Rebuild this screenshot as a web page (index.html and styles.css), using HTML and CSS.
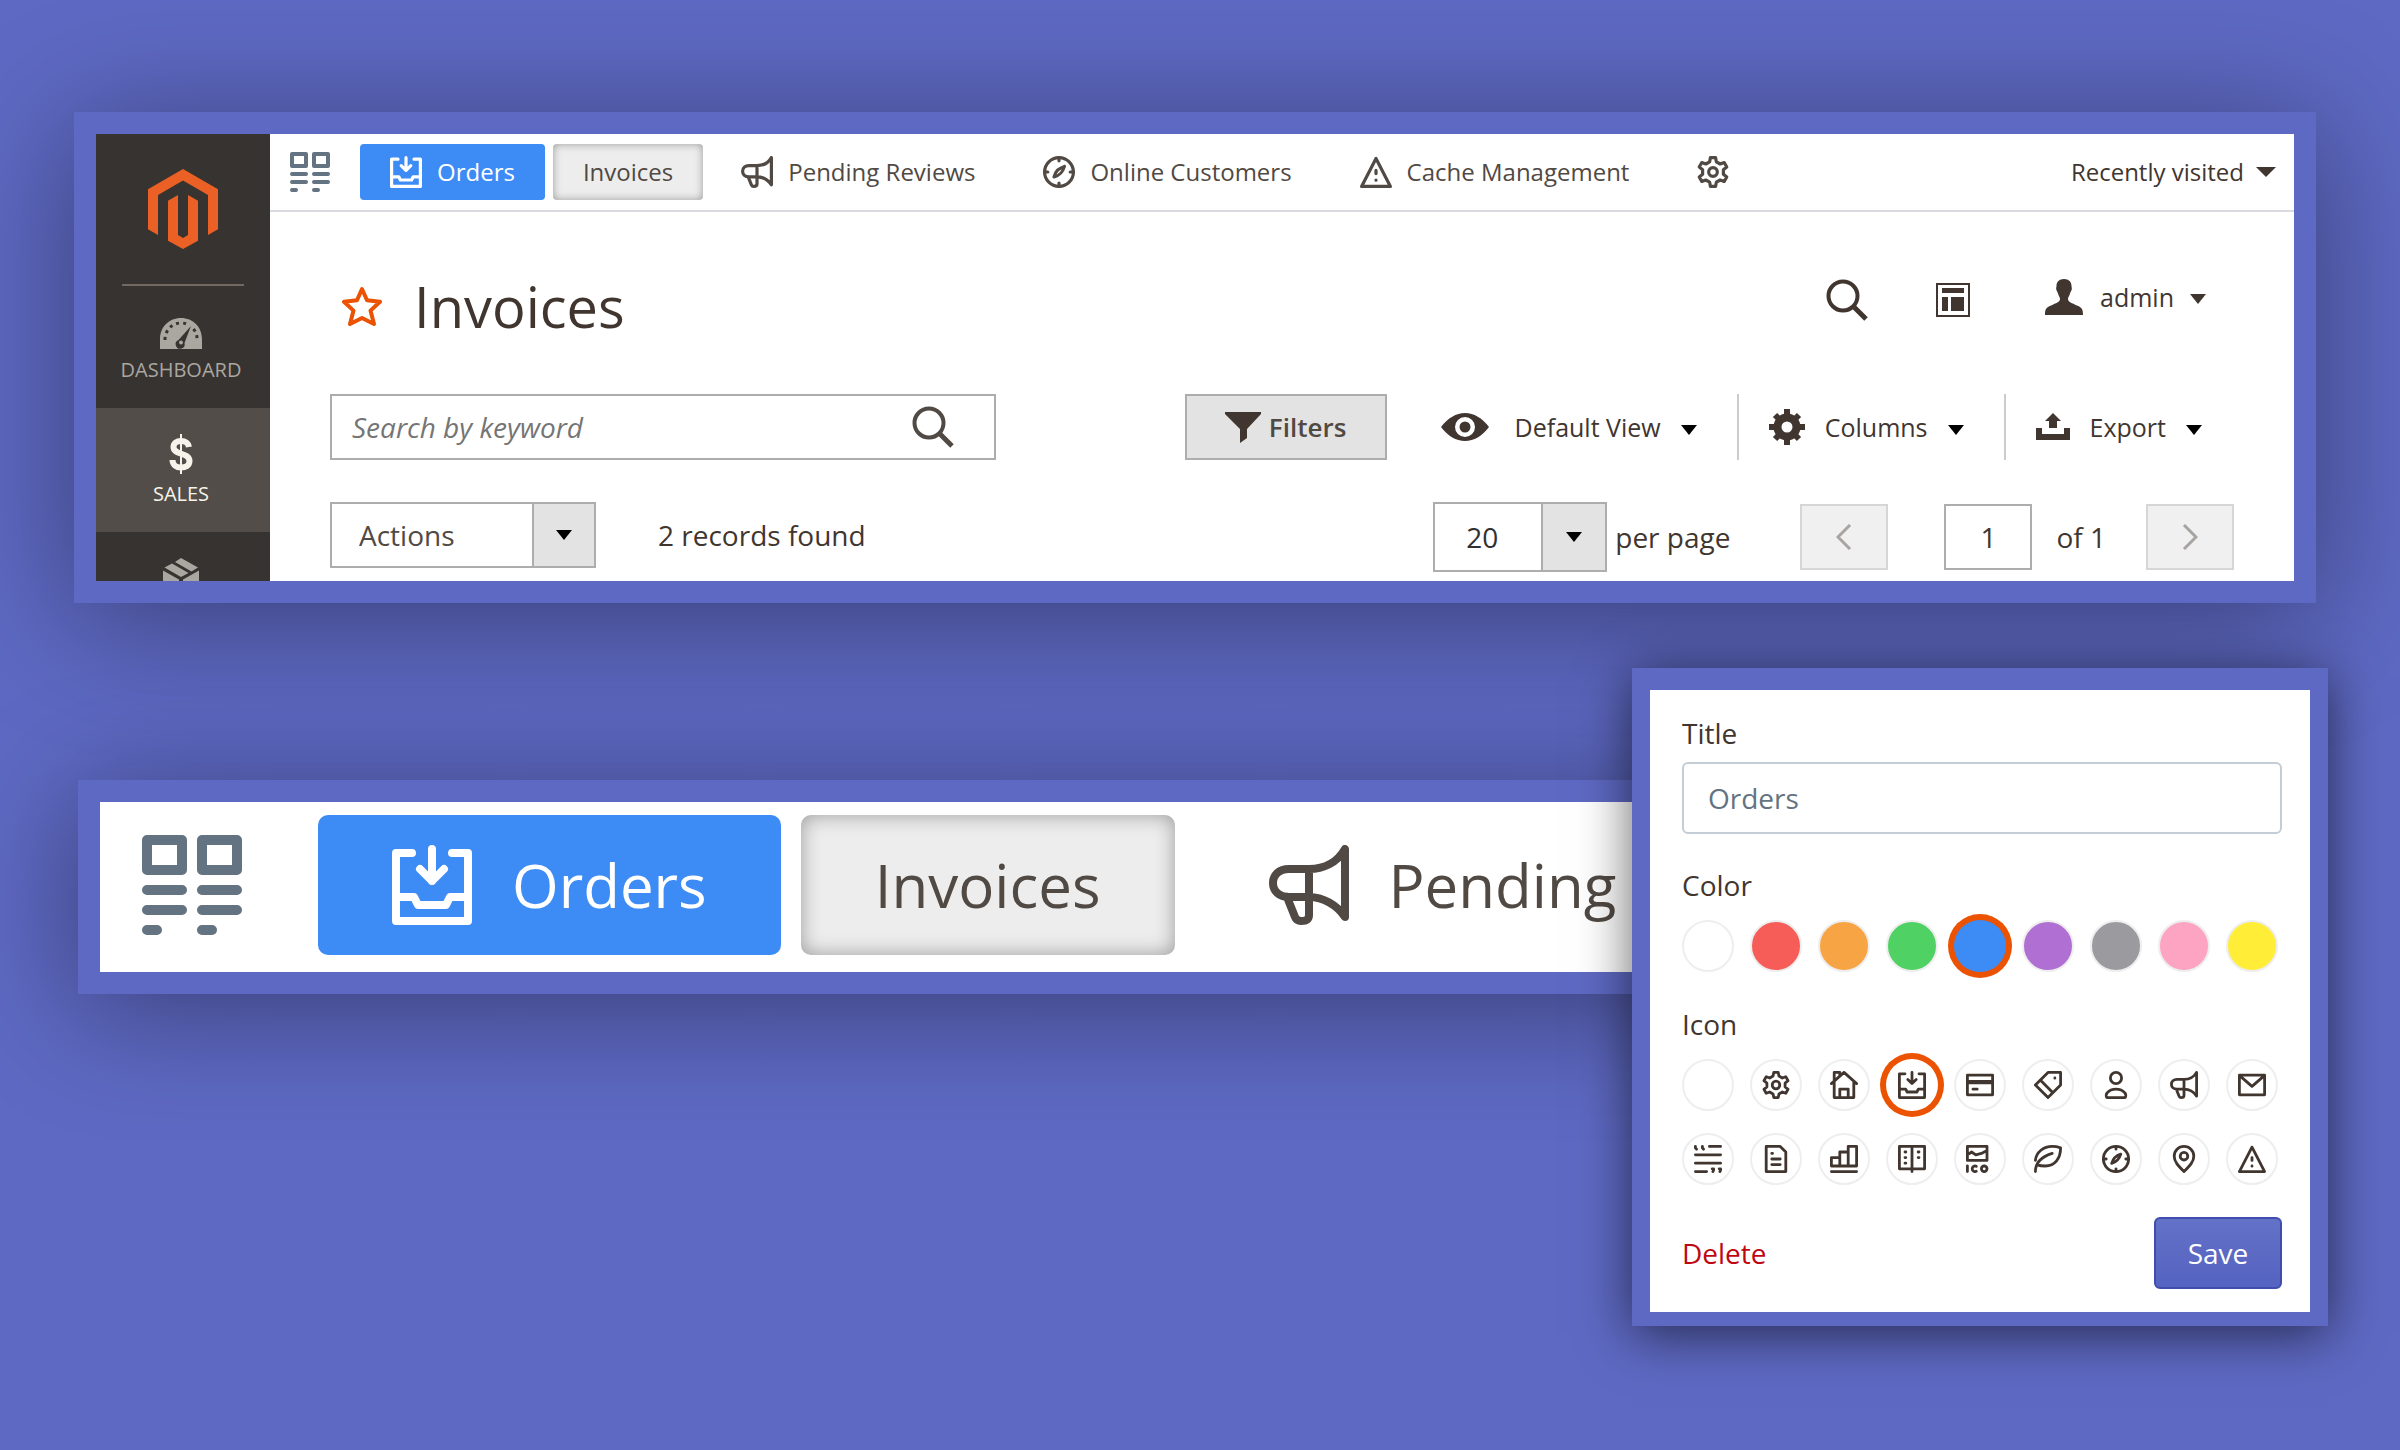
FILE: index.html
```html
<!DOCTYPE html>
<html lang="en">
<head>
    <meta charset="UTF-8">
    <title>Invoices - Admin bookmarks</title>
    <meta name="viewport" content="width=device-width, initial-scale=1">
    <link rel="stylesheet" href="styles.css">
</head>
<body>
    <!-- icon sprite, 20x20 grid -->
    <svg class="sprite" aria-hidden="true">
        <symbol id="i-grid" viewBox="0 0 20 20">
            <path fill="none" stroke="currentColor" stroke-width="2" stroke-linejoin="round" d="M1 1h7v6H1zM12 1h7v6h-7z"/>
            <path fill="none" stroke="currentColor" stroke-width="2" stroke-linecap="round" d="M1 11h7M12 11h7M1 15h7M12 15h7M1 19h2M12 19h2"/>
        </symbol>
        <symbol id="i-gear" viewBox="0 0 20 20">
            <path d="M8.4 1h3.2l.5 2.6 2.4 1.4 2.5-.9 1.6 2.8-2.1 1.7v2.8l2.1 1.7-1.6 2.8-2.5-.9-2.4 1.4-.5 2.6H8.4l-.5-2.6-2.4-1.4-2.5.9-1.6-2.8 2.1-1.7V8.6L1.4 6.9 3 4.1l2.5.9 2.4-1.4z"/>
            <circle cx="10" cy="10" r="2.7"/>
        </symbol>
        <symbol id="i-home" viewBox="0 0 20 20">
            <path d="M1 9l9-8 9 8M3 8v11h14V8M7 19v-6h6v6M3 7V1h4v2"/>
        </symbol>
        <symbol id="i-inbox" viewBox="0 0 20 20">
            <path d="M5 2H1v17h18V2h-4M10 1v8M7 6l3 3 3-3M1 13h4.5l1 2h7l1-2H19"/>
        </symbol>
        <symbol id="i-card" viewBox="0 0 20 20">
            <path d="M1 3h18v14H1zM5 13h3"/>
            <path stroke-width="3" d="M1 8h18"/>
        </symbol>
        <symbol id="i-tag" viewBox="0 0 20 20">
            <path d="M10 1h9v9l-9 9-9-9zM4.5 6.5l9 9M14.9 5v.1"/>
        </symbol>
        <symbol id="i-user" viewBox="0 0 20 20">
            <circle cx="10" cy="5" r="4"/>
            <path d="M3.5 19h13c.8-.8.5-2.5 0-3.2C14.9 14 12.6 13 10 13s-4.9 1-6.5 2.8c-.5.7-.8 2.4 0 3.2z"/>
        </symbol>
        <symbol id="i-horn" viewBox="0 0 20 20">
            <path d="M19 1v17c-2-3-5.500-5-9-5H5c-2.500 0-4-1.500-4-3.500S2.500 6 5 6h5c3.500 0 7-1.500 9-5zM4.500 13l2 5c.3.8.8 1 1.500 1 1 0 2-.2 2-1.500V6"/>
        </symbol>
        <symbol id="i-mail" viewBox="0 0 20 20">
            <path d="M1 3h18v14H1zM2 4l8 7 8-7"/>
        </symbol>
        <symbol id="i-quote" viewBox="0 0 20 20">
            <path d="M11 1h8M1 7h18M1 13h18M1 19h8M1 1v1l.8 1M6 1v1l.8 1M13 17h1v1l-.5 1M18 17h1v1l-.5 1"/>
        </symbol>
        <symbol id="i-doc" viewBox="0 0 20 20">
            <path d="M3 1h10l4 4v14H3zM7 6h.5M7 10h6M7 14h6"/>
        </symbol>
        <symbol id="i-chart" viewBox="0 0 20 20">
            <path d="M1 15V9h6v6M7 9V5h6v10M13 5V1h6v14H1M1 19h18"/>
        </symbol>
        <symbol id="i-book" viewBox="0 0 20 20">
            <path d="M1 1h18v16H1zM10 1v18M5 5h.6M5 9h.6M5 13h.6M14.400 5h.6M14.400 9h.6"/>
        </symbol>
        <symbol id="i-ico" viewBox="0 0 20 20">
            <path d="M1 1h14v10H1zM1 7l3-2 3 2 4-1 4-2M1 15v4M7.300 15.200a2 2 0 1 0 0 3.600"/>
            <circle cx="13" cy="17" r="2"/>
        </symbol>
        <symbol id="i-leaf" viewBox="0 0 20 20">
            <path d="M1 11C1.500 5 7 1 13 1c2.500 0 4.500.5 6 1 0 7.500-4 13-11 13-2 0-3.500 0-5-.6M1 19c0-6 4-10.500 12-13"/>
        </symbol>
        <symbol id="i-compass" viewBox="0 0 20 20">
            <circle cx="10" cy="10" r="9"/>
            <path d="M10 1v2M10 17v2M1 10h2M17 10h2M13.400 6.500C9.500 7.800 8 9.400 6.900 13.100c3.900-1.100 5.400-2.900 6.500-6.600z"/>
        </symbol>
        <symbol id="i-pin" viewBox="0 0 20 20">
            <path d="M10 19C6 15 3 12 3 8a7 7 0 0 1 14 0c0 4-3 7-7 11z"/>
            <circle cx="10" cy="8" r="2.700"/>
        </symbol>
        <symbol id="i-alert" viewBox="0 0 20 20">
            <path d="M10 1.500L1 19h18zM10 9v2M10 15v.1"/>
        </symbol>
        <symbol id="i-search" viewBox="0 0 42 42">
            <circle cx="17" cy="17" r="14.500" fill="none" stroke="currentColor" stroke-width="4"/>
            <path fill="none" stroke="currentColor" stroke-width="5" d="M27 27l13 13"/>
        </symbol>
    </svg>

    <section class="frame admin">
        <nav class="sidebar">
            <a href="#" class="logo" aria-label="Magento">
                <svg width="70" height="80" viewBox="0 0 35 40" fill="#eb6125">
                    <path d="M0 10.100L17.500 0 35 10.100v20l-5 2.900V13L17.500 5.800 5 13v20l-5-2.900z"/>
                    <path d="M10 15.900L15 13v20l2.500 1.500L20 33V13l5 2.900v20L17.500 40 10 35.900z"/>
                </svg>
            </a>
            <a href="#" class="menu-item">
                <svg width="44" height="40" viewBox="0 0 44 40" fill="currentColor">
                    <path fill-rule="evenodd" d="M1 39V29C1 17 10 8 22 8s21 9 21 21v10zM32 16l-12.500 14a4.500 4.500 0 1 0 6 3z"/>
                    <circle cx="22" cy="32.500" r="2"/>
                    <path fill="none" stroke="#373330" stroke-width="3" stroke-dasharray="3 4" d="M6 30c0-10 7-17 16-17 3 0 5 .6 7 1.600M34.500 19c2.500 3 3.500 6 3.500 10"/>
                </svg>
                <span>DASHBOARD</span>
            </a>
            <a href="#" class="menu-item active">
                <svg width="26" height="40" viewBox="0 0 26 40" fill="none" stroke="currentColor">
                    <path stroke-width="6" d="M21 13c-.5-3.500-3.500-6-8-6s-7.500 2.500-7.500 6c0 8.500 16 5 16 14 0 4.500-4 6.500-8.500 6.500S4.500 31 4.500 26"/>
                    <path stroke-width="2" d="M13 0v40"/>
                </svg>
                <span>SALES</span>
            </a>
            <a href="#" class="menu-item peek" aria-label="Products">
                <svg width="36" height="40" viewBox="0 0 36 40" fill="currentColor">
                    <path d="M18 0l17 9.500-6.500 4L12 4zM9 5.500L25.500 15 18 19 1.500 9.500zM0 12.500l16 9V40L0 31zM36 12.500l-16 9V40l16-9z"/>
                </svg>
            </a>
        </nav>
        <div class="main">
            <div class="bookmarks">
                <button type="button" class="grid-button" aria-label="Bookmarks"><svg><use href="#i-grid"/></svg></button>
                <a href="#" class="bookmark blue"><svg class="icon"><use href="#i-inbox"/></svg>Orders</a>
                <a href="#" class="bookmark current">Invoices</a>
                <a href="#" class="bookmark"><svg class="icon"><use href="#i-horn"/></svg>Pending Reviews</a>
                <a href="#" class="bookmark"><svg class="icon"><use href="#i-compass"/></svg>Online Customers</a>
                <a href="#" class="bookmark"><svg class="icon"><use href="#i-alert"/></svg>Cache Management</a>
                <a href="#" class="bookmark" aria-label="Settings"><svg class="icon"><use href="#i-gear"/></svg></a>
                <button type="button" class="recent">Recently visited <i class="caret wide"></i></button>
            </div>

            <div class="content">
                <header class="page-head">
                    <svg class="star" width="40" height="40" viewBox="0 0 40 40">
                        <path fill="none" stroke="#eb5202" stroke-width="4" stroke-linejoin="round" d="M20 3l5 11.200 13 1.600-9.500 8.800L32 38l-12-6-12 6 3.500-13.400L2 15.800l13-1.600z"/>
                    </svg>
                    <h1>Invoices</h1>
                    <div class="head-tools">
                        <button type="button" aria-label="Search"><svg width="42" height="42"><use href="#i-search"/></svg></button>
                        <button type="button" aria-label="Layout">
                            <svg width="34" height="34" viewBox="0 0 34 34" fill="currentColor">
                                <path fill="none" stroke="currentColor" stroke-width="2" d="M1 1h32v32H1z"/>
                                <path d="M6 5h22v5H6zM6 14h6v14H6zM15 14h13v14H15z"/>
                            </svg>
                        </button>
                        <button type="button" class="account">
                            <svg width="40" height="36" viewBox="0 0 40 36" fill="currentColor">
                                <path d="M20 0c5 0 7.500 3 7.500 7 0 1 .5 1.500.3 3-.2 2-1.300 2.500-1.800 4.500-.6 2.500-2 3.500-2 5.500 0 3 4 4 9 6.500 5 2.300 6 3.500 6 9.500H1c0-6 1-7.200 6-9.500 5-2.500 9-3.500 9-6.500 0-2-1.400-3-2-5.500-.5-2-1.600-2.500-1.800-4.500-.2-1.500.3-2 .3-3 0-4 2.500-7 7.500-7z"/>
                            </svg>
                            admin <i class="caret"></i>
                        </button>
                    </div>
                </header>

                <div class="toolbar">
                    <div class="search">
                        <input type="text" placeholder="Search by keyword" aria-label="Search by keyword">
                        <button type="button" aria-label="Search"><svg width="42" height="42"><use href="#i-search"/></svg></button>
                    </div>
                    <button type="button" class="filters">
                        <svg width="36" height="32" viewBox="0 0 36 32" fill="#41362f"><path d="M0 1h36v2L22 18v9l-7 5V18L0 3z"/></svg>
                        Filters
                    </button>
                    <div class="grid-tools">
                        <button type="button">
                            <svg class="eye" width="48" height="28" viewBox="0 0 48 28" fill="currentColor">
                                <path fill-rule="evenodd" d="M0 14C7 5 15 0 24 0s17 5 24 14c-7 9-15 14-24 14S7 23 0 14zM24 4a10 10 0 1 0 0 20 10 10 0 0 0 0-20z"/>
                                <circle cx="24" cy="14" r="5.500"/>
                            </svg>
                            Default View <i class="caret"></i>
                        </button>
                        <button type="button">
                            <svg width="36" height="36" viewBox="-18 -18 36 36" fill="none" stroke="currentColor">
                                <circle r="9.500" stroke-width="8"/>
                                <path stroke-width="6" d="M0-18v6M0 12v6M-18 0h6M12 0h6M-12-12l4 4M12 12l-4-4M12-12l-4 4M-12 12l4-4"/>
                            </svg>
                            Columns <i class="caret"></i>
                        </button>
                        <button type="button">
                            <svg width="34" height="28" viewBox="0 0 34 28" fill="currentColor">
                                <path d="M17 0l8 8h-4v7h-8V8H9zM0 15h6v6h22v-6h6v12H0z"/>
                            </svg>
                            Export <i class="caret"></i>
                        </button>
                    </div>
                </div>

                <div class="toolbar">
                    <div class="select actions">
                        <select aria-label="Actions"><option>Actions</option></select>
                        <span class="arrow"><i class="caret"></i></span>
                    </div>
                    <p class="records">2 records found</p>
                    <div class="select per-page">
                        <select id="per-page"><option>20</option></select>
                        <span class="arrow"><i class="caret"></i></span>
                    </div>
                    <label for="per-page" class="per-page-label">per page</label>
                    <div class="pager">
                        <button type="button" disabled aria-label="Previous page"><svg width="16" height="26" viewBox="0 0 16 26"><path d="M14 1L2 13l12 12"/></svg></button>
                        <input type="text" value="1" id="page">
                        <label for="page">of 1</label>
                        <button type="button" disabled aria-label="Next page"><svg width="16" height="26" viewBox="0 0 16 26"><path d="M2 1l12 12L2 25"/></svg></button>
                    </div>
                </div>
            </div>
        </div>
    </section>

    <div class="details">
        <section class="frame closeup">
            <div class="bookmarks large">
                <button type="button" class="grid-button" aria-label="Bookmarks"><svg><use href="#i-grid"/></svg></button>
                <a href="#" class="bookmark blue"><svg class="icon"><use href="#i-inbox"/></svg>Orders</a>
                <a href="#" class="bookmark current">Invoices</a>
                <a href="#" class="bookmark"><svg class="icon"><use href="#i-horn"/></svg>Pending</a>
            </div>
        </section>

        <form class="frame editor">
            <label class="field-label" for="title">Title</label>
            <input class="title-input" type="text" id="title" value="Orders">

            <fieldset>
                <legend>Color</legend>
                <div class="choices">
                    <input type="radio" name="color" class="c-white" aria-label="White">
                    <input type="radio" name="color" class="c-red" aria-label="Red">
                    <input type="radio" name="color" class="c-orange" aria-label="Orange">
                    <input type="radio" name="color" class="c-green" aria-label="Green">
                    <input type="radio" name="color" class="c-blue" aria-label="Blue" checked>
                    <input type="radio" name="color" class="c-purple" aria-label="Purple">
                    <input type="radio" name="color" class="c-gray" aria-label="Gray">
                    <input type="radio" name="color" class="c-pink" aria-label="Pink">
                    <input type="radio" name="color" class="c-yellow" aria-label="Yellow">
                </div>
            </fieldset>

            <fieldset>
                <legend>Icon</legend>
                <div class="choices">
                    <label><input type="radio" name="icon" aria-label="None"></label>
                    <label><input type="radio" name="icon" aria-label="Settings"><svg class="icon"><use href="#i-gear"/></svg></label>
                    <label><input type="radio" name="icon" aria-label="Home"><svg class="icon"><use href="#i-home"/></svg></label>
                    <label><input type="radio" name="icon" aria-label="Orders" checked><svg class="icon"><use href="#i-inbox"/></svg></label>
                    <label><input type="radio" name="icon" aria-label="Card"><svg class="icon"><use href="#i-card"/></svg></label>
                    <label><input type="radio" name="icon" aria-label="Tag"><svg class="icon"><use href="#i-tag"/></svg></label>
                    <label><input type="radio" name="icon" aria-label="Customer"><svg class="icon"><use href="#i-user"/></svg></label>
                    <label><input type="radio" name="icon" aria-label="Marketing"><svg class="icon"><use href="#i-horn"/></svg></label>
                    <label><input type="radio" name="icon" aria-label="Email"><svg class="icon"><use href="#i-mail"/></svg></label>
                    <label><input type="radio" name="icon" aria-label="Quote"><svg class="icon"><use href="#i-quote"/></svg></label>
                    <label><input type="radio" name="icon" aria-label="Page"><svg class="icon"><use href="#i-doc"/></svg></label>
                    <label><input type="radio" name="icon" aria-label="Reports"><svg class="icon"><use href="#i-chart"/></svg></label>
                    <label><input type="radio" name="icon" aria-label="Catalog"><svg class="icon"><use href="#i-book"/></svg></label>
                    <label><input type="radio" name="icon" aria-label="Favicon"><svg class="icon"><use href="#i-ico"/></svg></label>
                    <label><input type="radio" name="icon" aria-label="Leaf"><svg class="icon"><use href="#i-leaf"/></svg></label>
                    <label><input type="radio" name="icon" aria-label="Compass"><svg class="icon"><use href="#i-compass"/></svg></label>
                    <label><input type="radio" name="icon" aria-label="Location"><svg class="icon"><use href="#i-pin"/></svg></label>
                    <label><input type="radio" name="icon" aria-label="Warning"><svg class="icon"><use href="#i-alert"/></svg></label>
                </div>
            </fieldset>

            <div class="editor-actions">
                <button type="button" class="delete">Delete</button>
                <button type="button" class="save">Save</button>
            </div>
        </form>
    </div>
</body>
</html>
```
FILE: styles.css
```css
* {
    box-sizing: border-box;
}

body {
    margin: 0;
    padding: 112px 72px 0 74px;
    min-height: 100vh;
    background: #5e69c3;
    color: #41362f;
    font-family: "Open Sans", "Noto Sans", sans-serif;
    font-size: 28px;
    line-height: 40px;
    overflow-x: hidden;
}

a {
    color: inherit;
    text-decoration: none;
}

button,
input,
select {
    margin: 0;
    font: inherit;
    color: inherit;
}

button {
    padding: 0;
    border: 0;
    background: none;
    cursor: pointer;
}

svg {
    display: block;
    flex: none;
}

.sprite {
    position: absolute;
    width: 0;
    height: 0;
}

.icon {
    width: 32px;
    height: 32px;
    overflow: visible;
    fill: none;
    stroke: currentColor;
    stroke-width: 2;
    stroke-linecap: round;
    stroke-linejoin: round;
}

.caret {
    display: inline-block;
    flex: none;
    border: 8px solid transparent;
    border-top: 10px solid #000;
    border-bottom: 0;
}

.caret.wide {
    border-width: 10px 10px 0;
    border-top-color: #41362f;
}

.frame {
    border: 22px solid #5e69c3;
    background: #fff;
    box-shadow: 0 16px 120px rgba(0, 0, 0, 0.4);
}

/* admin panel */
.admin {
    display: flex;
    margin-right: 12px;
}

.sidebar {
    flex: none;
    width: 174px;
    background: #373330;
    color: #aaa6a0;
}

.logo {
    display: flex;
    justify-content: center;
    height: 152px;
    margin: 0 26px;
    padding-top: 35px;
    border-bottom: 2px solid #736963;
}

.menu-item {
    display: flex;
    flex-direction: column;
    align-items: center;
    gap: 8px;
    height: 124px;
    padding: 26px 4px 0 0;
    font-size: 20px;
    line-height: 24px;
}

.menu-item:nth-child(2) {
    height: 122px;
    padding-top: 24px;
}

.menu-item.active {
    background: #524d49;
    color: #f7f3eb;
}

.menu-item.peek {
    height: 49px;
    overflow: hidden;
}

.main {
    flex: 1;
    min-width: 0;
}

.bookmarks {
    display: flex;
    align-items: center;
    gap: 8px;
    padding: 10px 18px 10px 20px;
    border-bottom: 2px solid #dadbe0;
    font-size: 24px;
    line-height: 56px;
    white-space: nowrap;
}

.grid-button {
    margin-right: 22px;
    color: #637381;
}

.grid-button svg {
    width: 40px;
    height: 40px;
}

.bookmark {
    display: flex;
    align-items: center;
    gap: 15px;
    height: 56px;
    padding: 0 30px;
    border-radius: 4px;
    color: #514943;
}

.bookmark.blue {
    background: #3d8bf5;
    color: #fff;
}

.bookmark.current {
    background: #ededed;
    box-shadow: inset 0 0 8px rgba(0, 0, 0, 0.35);
}

.recent {
    display: flex;
    align-items: center;
    gap: 12px;
    margin-left: auto;
}

.content {
    padding: 48px 60px 9px;
}

.page-head {
    display: flex;
    align-items: center;
    height: 92px;
    margin-bottom: 42px;
}

.star {
    margin: 0 32px 0 12px;
}

h1 {
    margin: 0;
    font-size: 56px;
    font-weight: 400;
    line-height: 72px;
}

.head-tools {
    display: flex;
    align-items: center;
    gap: 68px;
    margin-left: auto;
    padding: 0 28px 12px 0;
}

.account {
    display: flex;
    align-items: center;
    gap: 16px;
    margin: 0 0 6px 6px;
    font-size: 25px;
}

.account .caret {
    margin-top: 4px;
    border-top-color: #41362f;
}

.toolbar {
    display: flex;
    align-items: flex-start;
    margin-bottom: 42px;
    white-space: nowrap;
}

.toolbar:last-child {
    margin-bottom: 0;
}

.search {
    display: flex;
    align-items: center;
    width: 666px;
    height: 66px;
    padding-right: 40px;
    border: 2px solid #adadad;
}

.search input {
    flex: 1;
    min-width: 0;
    padding: 0 20px;
    border: 0;
    outline: 0;
}

.search input::placeholder {
    color: #757575;
    font-style: italic;
}

.search button {
    color: #514943;
}

.filters {
    display: flex;
    align-items: center;
    justify-content: center;
    gap: 8px;
    width: 202px;
    height: 66px;
    margin-left: auto;
    border: 2px solid #adadad;
    background: #e3e3e3;
    color: #514943;
    font-size: 26px;
    font-weight: 600;
}

.grid-tools {
    display: flex;
    margin-left: 24px;
    font-size: 25px;
}

.grid-tools button {
    display: flex;
    align-items: center;
    gap: 20px;
    height: 66px;
    padding: 0 40px 0 30px;
}

.grid-tools button + button {
    border-left: 2px solid #ccc;
}

.grid-tools button:last-child {
    padding-right: 32px;
}

.grid-tools .caret {
    margin-top: 6px;
}

.eye {
    margin-right: 6px;
}

.select {
    display: grid;
    height: 66px;
    border: 2px solid #adadad;
    color: #514943;
}

.select select {
    grid-area: 1 / 1 / 2 / 3;
    appearance: none;
    width: 100%;
    padding: 0 27px;
    border: 0;
    background: #fff;
}

.arrow {
    grid-area: 1 / 2;
    display: flex;
    align-items: center;
    justify-content: center;
    border-left: 2px solid #adadad;
    background: #e3e3e3;
    pointer-events: none;
}

.actions {
    grid-template-columns: 1fr 62px;
    width: 266px;
}

.records {
    margin: 0 0 0 62px;
    line-height: 66px;
}

.per-page {
    grid-template-columns: 1fr 64px;
    width: 174px;
    height: 70px;
    margin-left: auto;
    color: #303030;
}

.per-page select {
    padding: 0 31px;
}

.per-page-label {
    padding-left: 8px;
    line-height: 70px;
}

.pager {
    display: flex;
    align-items: center;
    height: 70px;
    margin-left: 70px;
}

.pager button,
.pager input {
    width: 88px;
    height: 66px;
    border: 2px solid #adadad;
    background: #fff;
    text-align: center;
}

.pager button {
    display: flex;
    align-items: center;
    justify-content: center;
    border-color: #d6d6d6;
    background: #f0f0f0;
}

.pager path {
    fill: none;
    stroke: #a8a4a1;
    stroke-width: 3;
}

.pager input {
    margin-left: 56px;
}

.pager label {
    padding: 0 40px 0 24px;
}

/* lower row: enlarged bookmarks with the editor on top */
.details {
    display: flex;
    align-items: flex-start;
    margin-top: 65px;
}

.closeup {
    flex: 1;
    min-width: 0;
    margin: 112px -60px 0 4px;
}

.large {
    gap: 20px;
    padding: 13px 42px 17px;
    border: 0;
    overflow: hidden;
    font-size: 60px;
    line-height: 140px;
}

.large .grid-button {
    margin-right: 56px;
}

.large .grid-button svg {
    width: 100px;
    height: 100px;
}

.large .bookmark {
    gap: 40px;
    height: 140px;
    padding: 0 74px;
    border-radius: 10px;
}

.large .bookmark.current {
    box-shadow: inset 0 0 20px rgba(0, 0, 0, 0.35);
}

.large .icon {
    width: 80px;
    height: 80px;
}

.editor {
    position: relative;
    flex: none;
    width: 696px;
    padding: 23px 28px 23px 32px;
    border-width: 22px 18px 14px;
    box-shadow: 0 8px 50px rgba(0, 0, 0, 0.6);
}

.field-label {
    display: block;
}

.title-input {
    width: 100%;
    height: 72px;
    margin: 9px 0 31px;
    padding: 0 24px;
    border: 2px solid #c4cdd5;
    border-radius: 6px;
    color: #637381;
}

fieldset {
    margin: 0 0 32px;
    padding: 0;
    border: 0;
}

legend {
    padding: 0;
}

.choices {
    display: grid;
    grid-template-columns: repeat(9, 52px);
    gap: 22px 16px;
    margin-top: 15px;
}

.choices label {
    display: grid;
    place-items: center;
}

.choices label > * {
    grid-area: 1 / 1;
}

.choices .icon {
    width: 28px;
    height: 28px;
    pointer-events: none;
}

input[type="radio"] {
    appearance: none;
    width: 52px;
    height: 52px;
    border: 2px solid #eee;
    border-radius: 50%;
    cursor: pointer;
}

input[type="radio"]:checked {
    border-color: transparent;
    box-shadow: 0 0 0 6px #eb5202;
}

.c-red { background: #f75d58; }
.c-orange { background: #f7a544; }
.c-green { background: #50d163; }
.c-blue { background: #3d8bf5; }
.c-purple { background: #b06fd2; }
.c-gray { background: #9b9a9f; }
.c-pink { background: #fea4c3; }
.c-yellow { background: #ffed37; }

.editor-actions {
    display: flex;
    align-items: center;
    justify-content: space-between;
}

.delete {
    color: #bf0711;
}

.save {
    width: 128px;
    height: 72px;
    border: 2px solid #3f4eae;
    border-radius: 6px;
    background: linear-gradient(#6371c7, #5563c1);
    color: #fff;
}
```
